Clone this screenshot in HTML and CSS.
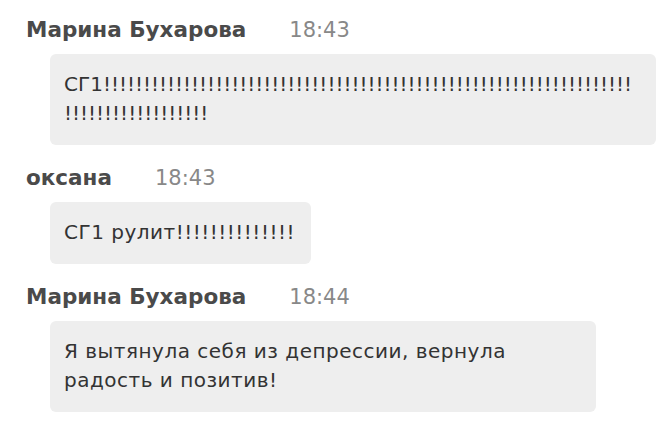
FILE: index.html
```html
<!DOCTYPE html>
<html lang="ru">
<head>
<meta charset="utf-8">
<title>Чат</title>
<link rel="stylesheet" href="styles.css">
</head>
<body>
<div class="chat">
  <div class="msg">
    <div class="msg-head">
      <span class="msg-name">Марина Бухарова</span>
      <span class="msg-time">18:43</span>
    </div>
    <div class="bubble bubble--full">СГ1!!!!!!!!!!!!!!!!!!!!!!!!!!!!!!!!!!!!!!!!!!!!!!!!!!!!!!!!!!!!!!!!!!!!!!!!!!!!!!!!!!!!</div>
  </div>
  <div class="msg">
    <div class="msg-head">
      <span class="msg-name">оксана</span>
      <span class="msg-time">18:43</span>
    </div>
    <div class="bubble">СГ1 рулит!!!!!!!!!!!!!!</div>
  </div>
  <div class="msg">
    <div class="msg-head">
      <span class="msg-name">Марина Бухарова</span>
      <span class="msg-time">18:44</span>
    </div>
    <div class="bubble bubble--wide">Я вытянула себя из депрессии, вернула<br>радость и позитив!</div>
  </div>
</div>
</body>
</html>
```
FILE: styles.css
```css
* { box-sizing: border-box; }
html, body { margin: 0; padding: 0; background: #fff; }
body {
  font-family: "DejaVu Sans", Verdana, sans-serif;
  color: #333;
}
.chat {
  display: flex;
  flex-direction: column;
  align-items: flex-start;
  gap: 21px;
  padding: 18px 0 0 26px;
}
.msg {
  display: flex;
  flex-direction: column;
  align-items: flex-start;
  gap: 12px;
}
.msg-head {
  display: flex;
  align-items: baseline;
  gap: 43px;
  line-height: 24px;
}
.msg-name {
  font-weight: bold;
  font-size: 21.5px;
  color: #4a4a4a;
}
.msg-time {
  font-size: 21px;
  color: #888;
}
.bubble {
  margin-left: 24px;
  background: #eeeeee;
  border-radius: 6px;
  padding: 16px 16px 17px 14px;
  font-size: 20px;
  line-height: 29px;
  letter-spacing: 0.5px;
  color: #333;
  overflow-wrap: anywhere;
}
.bubble--full { width: 606px; letter-spacing: 0; }
.bubble--wide { width: 546px; }
```
